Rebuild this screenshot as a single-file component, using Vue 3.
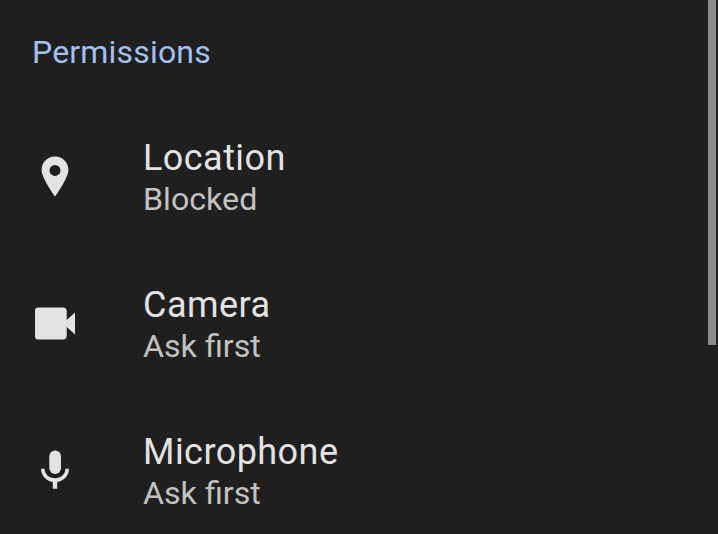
<script setup>
const rows = [
  { id: 'pin', title: 'Location', sub: 'Blocked' },
  { id: 'cam', title: 'Camera', sub: 'Ask first' },
  { id: 'mic', title: 'Microphone', sub: 'Ask first' }
]
</script>

<template>
  <div class="page">
    <h2 class="head">Permissions</h2>
    <div v-for="r in rows" :key="r.id" class="row">
      <div class="ico">
        <svg width="54" height="54" viewBox="0 0 54 54">
          <path v-if="r.id === 'pin'" fill-rule="evenodd" d="M27 2.500C19.400 2.500 13.600 8.400 13.600 15.900C13.600 23 22.600 36 27 42.500C31.400 36 40.400 23 40.400 15.900C40.400 8.400 34.600 2.500 27 2.500ZM27 10.900A5.500 5.500 0 1 1 27 21.900A5.500 5.500 0 1 1 27 10.900Z" />
          <path v-else-if="r.id === 'cam'" d="M10.300 6.500H35A3.700 3.700 0 0 1 38.700 10.200V19L47 11.500V33.500L38.700 26V34.800A3.700 3.700 0 0 1 35 38.500H10.300A3.300 3.300 0 0 1 7 35.200V9.800A3.300 3.300 0 0 1 10.300 6.500Z" />
          <g v-else>
            <rect x="21.300" y="2.500" width="11.700" height="23.500" rx="5.850" />
            <path d="M13 20.800H16.600C16.600 26.500 21.500 30.300 27 30.300C32.500 30.300 37.400 26.500 37.400 20.800H41C41 28 35.500 33 29.200 34V40.800H24.800V34C18.500 33 13 28 13 20.800Z" />
          </g>
        </svg>
      </div>
      <div class="txt">
        <div class="title">{{ r.title }}</div>
        <div class="sub">{{ r.sub }}</div>
      </div>
    </div>
    <div class="bar"></div>
  </div>
</template>

<style>
html, body { margin: 0; background: #1f1f1f; }
</style>

<style scoped>
.page {
  position: relative;
  width: 718px;
  height: 534px;
  overflow: hidden;
  box-sizing: border-box;
  padding-top: 32px;
  background: #1f1f1f;
  font-family: Roboto, sans-serif;
}
.head {
  margin: 0 0 0 32px;
  height: 40px;
  line-height: 40px;
  font-size: 32px;
  font-weight: 400;
  color: #a4c1f0;
  letter-spacing: 0.18px;
}
.row {
  display: flex;
  align-items: center;
  height: 147px;
}
.row:first-of-type { margin-top: 32px; }
.ico {
  width: 143px;
  margin-top: 6px;
  padding-left: 28px;
  box-sizing: border-box;
  flex: none;
  display: flex;
  fill: #e3e3e3;
}
.title {
  font-size: 36px;
  line-height: 42px;
  color: #e3e3e3;
  letter-spacing: 0.45px;
}
.sub {
  font-size: 32.200px;
  line-height: 40px;
  color: #c2c2c2;
}
.bar {
  position: absolute;
  right: 2px;
  top: 0;
  width: 8px;
  height: 345px;
  background: #8a8a8a;
}
</style>
